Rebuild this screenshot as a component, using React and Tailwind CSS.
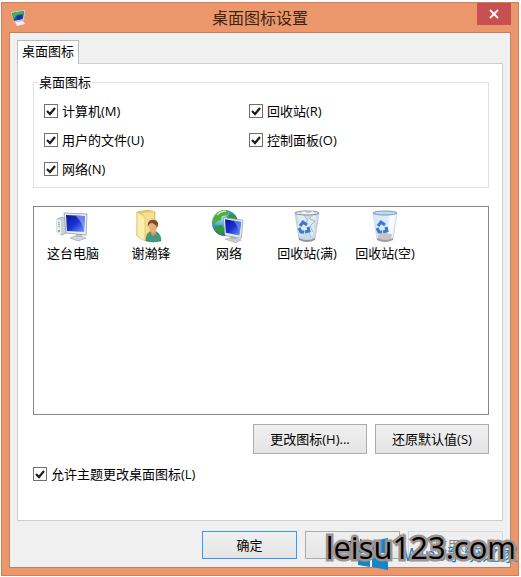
import { useState } from "react"

const iconOptions = [
    { id: "computer", label: "计算机(M)" },
    { id: "recycle", label: "回收站(R)" },
    { id: "files", label: "用户的文件(U)" },
    { id: "control", label: "控制面板(O)" },
    { id: "network", label: "网络(N)" },
]

const desktopIcons = [
    { id: "pc", name: "这台电脑", Icon: ComputerIcon },
    { id: "user", name: "谢瀚锋", Icon: UserFolderIcon },
    { id: "net", name: "网络", Icon: NetworkIcon },
    { id: "full", name: "回收站(满)", Icon: FullBinIcon },
    { id: "empty", name: "回收站(空)", Icon: EmptyBinIcon },
]

function Screen() {
    return (
        <>
            <path d="M10 29l9-2 9 3-6 3z" fill="#c9cfd3" stroke="#969fa4" strokeWidth=".6" />
            <path d="M16 24h6v5h-6z" fill="#aeb7bc" />
            <path d="M8 5l22 3-2 20-18-3z" fill="#e6edf1" stroke="#8d9ba5" strokeWidth=".8" />
            <path d="M10 7l18 3-2 15-15-3z" fill="url(#screenBlue)" />
            <path d="M19 8l9 2-2 14c-1-7-3-11-7-16z" fill="#7690ef" opacity=".7" />
        </>
    )
}

function ScreenGradient() {
    return (
        <linearGradient id="screenBlue" x1="0" y1="0" x2="1" y2="1">
            <stop offset="0" stopColor="#0a1793" />
            <stop offset=".5" stopColor="#1733d6" />
            <stop offset="1" stopColor="#7c9cf4" />
        </linearGradient>
    )
}

function ComputerIcon() {
    return (
        <svg viewBox="0 0 34 34" className="size-[34px]" aria-hidden="true">
            <defs><ScreenGradient /></defs>
            <path d="M1 10l5-2 4 2v14l-4 2-5-3z" fill="#cbd2d6" stroke="#8e999f" strokeWidth=".7" />
            <path d="M1 10l4 2v14l-4-3z" fill="#edf0f2" />
            <path d="M2 13l2 1M2 15l2 1M2 17l2 1" stroke="#7f8b93" strokeWidth=".8" />
            <circle cx="3" cy="22" r="1" fill="#5ea43e" />
            <path d="M14 29l8-3 8 3-8 3z" fill="#d3d7da" stroke="#969fa4" strokeWidth=".6" />
            <path d="M20 23h6v5h-6z" fill="#b9c1c5" />
            <path d="M8 4l23 1-1 21-20-2z" fill="#e9eff2" stroke="#8d9ba5" strokeWidth=".8" />
            <path d="M10 6l19 1-1 16-17-1z" fill="url(#screenBlue)" />
            <path d="M20 7l9 0-1 15c-1-6-4-11-8-15z" fill="#8fa5f2" opacity=".7" />
        </svg>
    )
}

function UserFolderIcon() {
    return (
        <svg viewBox="0 0 34 34" className="size-[34px]" aria-hidden="true">
            <path d="M3 3l11-2 7 2v25l-9 4-9-5z" fill="#e8ca67" stroke="#cba94b" strokeWidth=".6" />
            <path d="M8 4l12-1v25l-8 3z" fill="#f4de94" />
            <path d="M3 3l8 5v24l-8-5z" fill="#fbedac" stroke="#d7b953" strokeWidth=".6" />
            <path d="M12 32c0-7 3-10 7-10s8 3 8 10q-8 2-15 0z" fill="#439a7d" stroke="#2c7660" strokeWidth=".5" />
            <path d="M17 21h5v4l-3 2-2-2z" fill="#d59768" />
            <ellipse cx="19" cy="18" rx="4" ry="6" fill="#e8ad7d" />
            <path d="M14 18c-1-5 2-8 6-7 4 0 5 4 3 8-1-4-3-4-5-5-2 0-3 1-4 4z" fill="#7a4c27" />
        </svg>
    )
}

function NetworkIcon() {
    return (
        <svg viewBox="0 0 34 34" className="size-[34px]" aria-hidden="true">
            <defs>
                <ScreenGradient />
                <radialGradient id="globe" cx=".35" cy=".25" r=".8">
                    <stop offset="0" stopColor="#b5e9fb" />
                    <stop offset=".5" stopColor="#349fd5" />
                    <stop offset="1" stopColor="#0c508f" />
                </radialGradient>
            </defs>
            <circle cx="13" cy="14" r="13" fill="url(#globe)" />
            <path d="M3 6c4-5 10-6 14-4l-2 4-5 1-1 4-5 2-3 3c-1-3 0-7 2-10z" fill="#54ad37" />
            <path d="M3 17l6-1 4 4-2 6c-5-1-8-4-8-9zM18 4l5 3 2 6-7-2-3-3z" fill="#39952f" />
            <path d="M5 6c2-2 5-4 9-4" stroke="#c6efac" strokeWidth="1.5" fill="none" />
            <g transform="translate(4 4) scale(.9)"><Screen /></g>
        </svg>
    )
}

function RecycleMark() {
    return (
        <g fill="none" stroke="#3c78d2" strokeWidth="3">
            <path d="M10 17l3-4 4 3" />
            <path d="M9 19l2 4h3" />
            <path d="M18 18l1 4-4 1" />
        </g>
    )
}

function EmptyBinIcon() {
    return (
        <svg viewBox="0 0 34 34" className="size-[34px]" aria-hidden="true">
            <path d="M5 4h24l-4 26q-8 4-16 0z" fill="#d9eafa" stroke="#c0d1de" strokeWidth=".7" />
            <path d="M21 5h7l-4 24-5 2z" fill="#f4faff" />
            <path d="M10 26q6-3 14-1l-1 5q-7 3-13 0z" fill="#c9c5c4" />
            <path d="M9 29q8 4 16 0v2q-8 4-16 0z" fill="#9a9da0" />
            <ellipse cx="17" cy="4" rx="12" ry="2" fill="#bddcf4" stroke="#8799a6" strokeWidth="1" />
            <RecycleMark />
        </svg>
    )
}

function FullBinIcon() {
    return (
        <svg viewBox="0 0 34 34" className="size-[34px]" aria-hidden="true">
            <path d="M5 4h24l-4 26q-8 4-16 0z" fill="#c9dbe7" stroke="#b3c3ce" strokeWidth=".7" />
            <path d="M7 6l7-1 4 5 5-4 4 2-3 8 1 5-3 7-6-4-6 3-3-10 2-4z" fill="#dfeaf2" />
            <path d="M14 6l4 6-6 4M20 10l5 2-5 5 3 6M11 25l7-4 3 7M22 6l-3 4" stroke="#9fb8c9" fill="none" />
            <path d="M9 29q8 4 16 0v2q-8 4-16 0z" fill="#8f969a" />
            <ellipse cx="17" cy="4" rx="12" ry="2" fill="#e7eef2" stroke="#83929b" strokeWidth="1" />
            <path d="M9 4l5-2 4 2 5-2 3 3" fill="#f8fbfc" stroke="#a9b8c0" strokeWidth=".7" />
            <RecycleMark />
        </svg>
    )
}

function TitleIcon() {
    return (
        <svg viewBox="0 0 16 16" className="ml-0.5 size-4" aria-hidden="true">
            <path d="M0 2l14-2-1 10-10 2z" fill="#c3dadd" />
            <path d="M1 3l12-2-1 8-9 2z" fill="#1b55a5" />
            <path d="M1 3l12-2-1 3-6 1-3 4z" fill="#41b34d" />
            <path d="M6 6l5-1v4l-5 1z" fill="#1430ae" />
            <path d="M4 12l8-1 2 3-8 2z" fill="#eceff6" />
        </svg>
    )
}

function CheckBox({ label, checked, onChange }) {
    return (
        <label className="flex items-center gap-1 whitespace-nowrap">
            <span className="grid size-3.5 place-items-center">
                <input
                    type="checkbox"
                    checked={checked}
                    onChange={onChange}
                    className="peer col-start-1 row-start-1 size-3.5 appearance-none border border-[#707070] bg-white"
                />
                <svg viewBox="0 0 14 14" className="pointer-events-none invisible col-start-1 row-start-1 size-3.5 peer-checked:visible" aria-hidden="true">
                    <path d="M3 7l3 3 5-6" fill="none" stroke="#1d1d1d" strokeWidth="2.2" />
                </svg>
            </span>
            {label}
        </label>
    )
}

export default function App() {
    const [checked, setChecked] = useState({
        computer: true,
        recycle: true,
        files: true,
        control: true,
        network: true,
        theme: true,
    })

    const toggle = (id) => {
        setChecked((prev) => ({ ...prev, [id]: !prev[id] }))
    }

    return (
        <div className="bg-white pt-0.5 pr-0.5 pb-px pl-px font-['Open_Sans','Noto_Sans_CJK_SC',sans-serif] text-[13px] leading-5 text-black">
            <main className="relative border border-[#cf805b] bg-[#eb976b] px-[7px] pb-[7px]">
                <header className="grid h-[29px] grid-cols-[1fr_auto_1fr] items-center">
                    <TitleIcon />
                    <h1 className="text-base text-[#3d2417]">桌面图标设置</h1>
                    <button aria-label="关闭" className="grid h-[22px] w-[34px] place-items-center self-start justify-self-end bg-[#c75050]">
                        <svg viewBox="0 0 10 10" className="size-2.5" aria-hidden="true">
                            <path d="M1 1l8 8M9 1l-8 8" stroke="white" strokeWidth="1.8" />
                        </svg>
                    </button>
                </header>

                <div className="border border-[#bd8065] bg-[#f0f0f0] px-[7px] pt-[7px] pb-2">
                    <div role="tablist" className="flex">
                        <button role="tab" aria-selected="true" className="-mb-px flex h-6 border border-b-0 border-[#bcbcbc] bg-white px-1">
                            桌面图标
                        </button>
                    </div>

                    <section className="border border-[#cfcfcf] bg-white pt-2 pr-[13px] pb-9 pl-[15px]">
                        <fieldset className="border border-[#e0e0e0] px-2.5 pb-1">
                            <legend className="-ml-1.5 px-px">桌面图标</legend>
                            <div className="grid grid-cols-[205px_1fr] pt-1">
                                {iconOptions.map((item) => (
                                    <div key={item.id} className="flex h-[29px] items-center">
                                        <CheckBox label={item.label} checked={checked[item.id]} onChange={() => toggle(item.id)} />
                                    </div>
                                ))}
                            </div>
                        </fieldset>

                        {/* icon preview list */}
                        <ul className="mt-[18px] flex h-[209px] flex-wrap content-start border border-[#828790]">
                            {desktopIcons.map(({ id, name, Icon }) => (
                                <li key={id} className="flex w-[78px] flex-col items-center pt-0.5 whitespace-nowrap">
                                    <Icon />
                                    <span>{name}</span>
                                </li>
                            ))}
                        </ul>

                        <div className="mt-[9px] flex justify-end gap-2">
                            <button className="h-[30px] w-[114px] border border-[#acacac] bg-linear-to-b from-[#f0f0f0] to-[#e5e5e5]">更改图标(H)...</button>
                            <button className="h-[30px] w-[114px] border border-[#acacac] bg-linear-to-b from-[#f0f0f0] to-[#e5e5e5]">还原默认值(S)</button>
                        </div>

                        <div className="mt-2.5 flex">
                            <CheckBox label="允许主题更改桌面图标(L)" checked={checked.theme} onChange={() => toggle("theme")} />
                        </div>
                    </section>

                    <footer className="mt-2.5 flex justify-end gap-2">
                        <button className="h-7 w-[95px] border border-[#3399ff] bg-linear-to-b from-[#f0f0f0] to-[#e5e5e5]">确定</button>
                        <button className="h-7 w-[95px] border border-[#acacac] bg-linear-to-b from-[#f0f0f0] to-[#e5e5e5]">取消</button>
                        <button disabled className="h-7 w-[95px] border border-[#d9d9d9] bg-[#efefef] text-[#838383]">应用(A)</button>
                    </footer>
                </div>

                {/* site marks laid over the bottom corner */}
                <div className="pointer-events-none absolute right-0 bottom-1 flex items-center gap-3.5 text-[#1683c5]">
                    <svg viewBox="0 0 34 34" className="size-[34px]" aria-hidden="true">
                        <path d="M2 6l12-2v12H2zM16 4l16-3v15H16zM2 18h12v12L2 28zM16 18h16v15l-16-3z" fill="#1686ca" />
                    </svg>
                    <span className="text-lg">Win8系统之家</span>
                </div>
                <div className="pointer-events-none absolute right-0.5 bottom-2 text-[31px] leading-10 font-medium [-webkit-text-stroke:5px_#9c9492] [paint-order:stroke_fill]">
                    leisu123.com
                </div>
            </main>
        </div>
    )
}
